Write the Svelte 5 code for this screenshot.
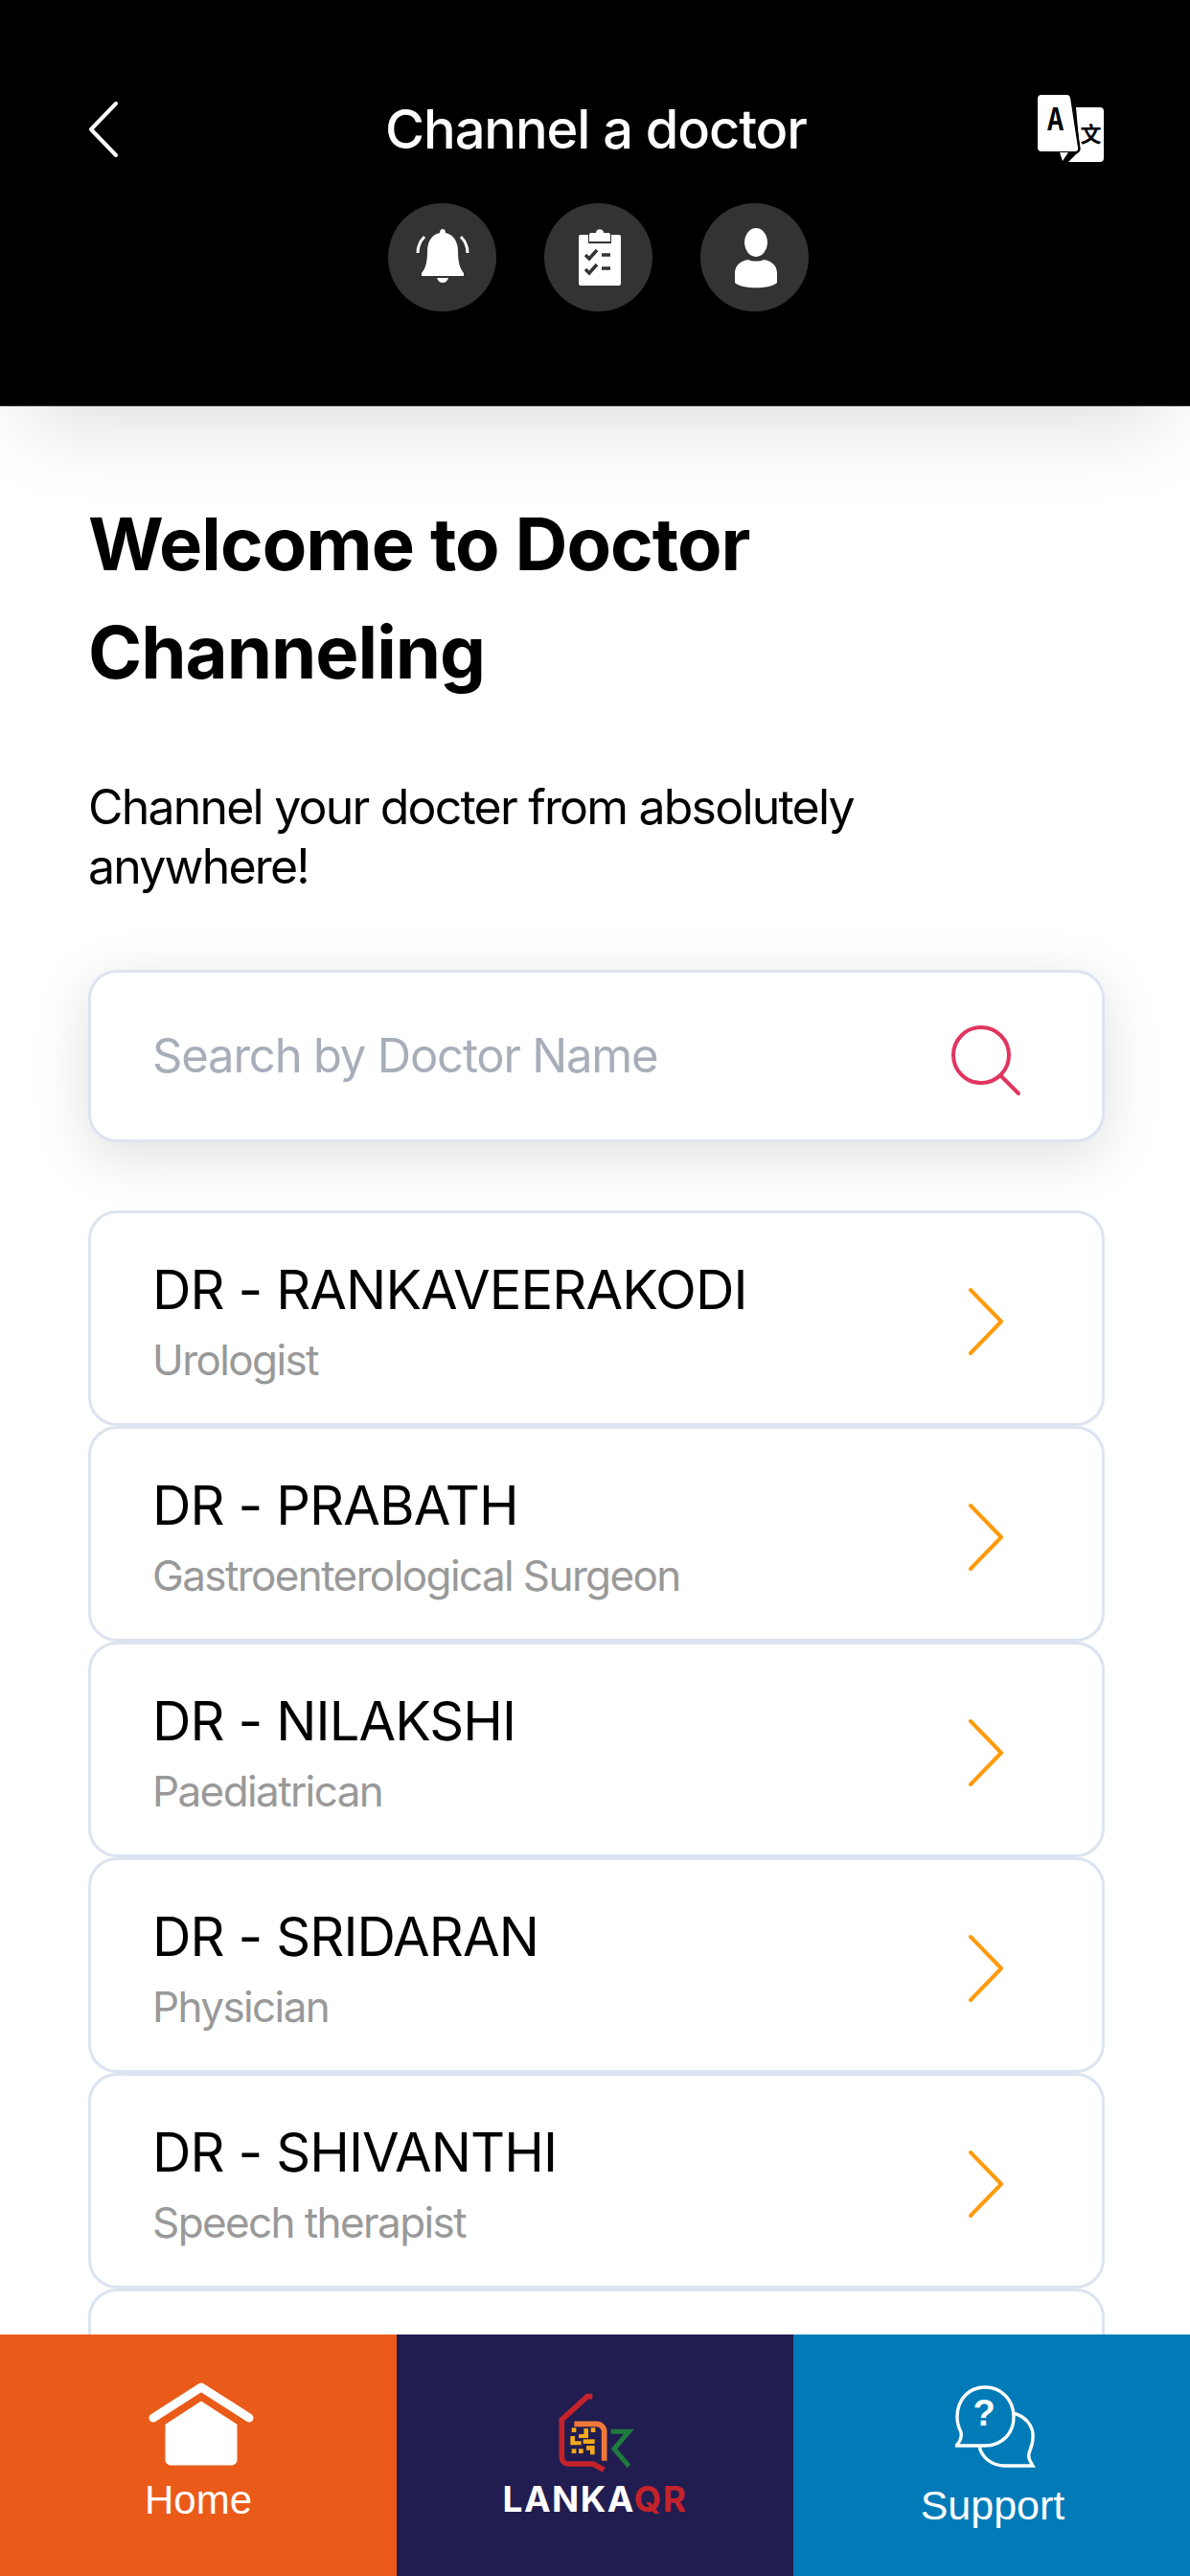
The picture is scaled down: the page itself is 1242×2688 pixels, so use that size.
<script lang="ts">
	const doctors = [
		{ name: 'DR - RANKAVEERAKODI', role: 'Urologist' },
		{ name: 'DR - PRABATH', role: 'Gastroenterological Surgeon' },
		{ name: 'DR - NILAKSHI', role: 'Paediatrican' },
		{ name: 'DR - SRIDARAN', role: 'Physician' },
		{ name: 'DR - SHIVANTHI', role: 'Speech therapist' }
	];
</script>

<div class="screen">
	<header>
		<div class="title-row">
			<svg class="back" width="34" height="60" viewBox="0 0 34 60">
				<path d="M30 3 L4 30 L30 57" fill="none" stroke="#fff" stroke-width="4" stroke-linecap="round" stroke-linejoin="round" />
			</svg>
			<h2>Channel a doctor</h2>
			<svg class="translate" width="70" height="72" viewBox="0 0 70 72">
				<path d="M40 13 H65 a4 4 0 0 1 4 4 V66 a4 4 0 0 1 -4 4 H32 L44 58 Z" fill="#fff" />
				<path d="M4 0 H30 a4 4 0 0 1 4 3 L42 55 a3 3 0 0 1 -3 4 H4 a4 4 0 0 1 -4 -4 V4 a4 4 0 0 1 4 -4 Z" fill="#fff" stroke="#000" stroke-width="5" paint-order="stroke" />
				<path d="M23 60 H32 L26 69 Z" fill="#fff" />
				<text class="glyph-a" transform="translate(18.5 37) scale(0.76 1)">A</text>
				<text class="glyph-b" x="55.5" y="49">文</text>
			</svg>
		</div>
		<div class="actions">
			<span class="round">
				<svg width="112" height="112" viewBox="0 0 112 112">
					<path d="M57 27 c2 0 3 2 3 4 c9 2 13 10 13 19 c0 12 2 18 6 23 v3 H35 v-3 c4 -5 6 -11 6 -23 c0 -9 4 -17 13 -19 c0 -2 1 -4 3 -4 Z" fill="#fff" />
					<path d="M51 78 H63 c-1 3 -3 5 -6 5 s-5 -2 -6 -5 Z" fill="#fff" />
					<path d="M31 52 c0 -7 2 -12 7 -17 M83 52 c0 -7 -2 -12 -7 -17" fill="none" stroke="#fff" stroke-width="3" />
				</svg>
			</span>
			<span class="round">
				<svg width="112" height="112" viewBox="0 0 112 112">
					<path d="M38 33 H46 V42 H70 V33 H78 a2 2 0 0 1 2 2 V84 a2 2 0 0 1 -2 2 H38 a2 2 0 0 1 -2 -2 V35 a2 2 0 0 1 2 -2 Z" fill="#fff" />
					<path d="M49 31 H54 c0 -5 8 -5 8 0 H67 a2 2 0 0 1 2 2 V40 H47 V33 a2 2 0 0 1 2 -2 Z" fill="#fff" />
					<path d="M43 54 L47 58 L55 49 M43 69 L47 73 L55 64" fill="none" stroke="#333" stroke-width="3.4" />
					<path d="M60 54 H69 M60 68 H69" fill="none" stroke="#333" stroke-width="3.4" />
				</svg>
			</span>
			<span class="round">
				<svg width="112" height="112" viewBox="0 0 112 112">
					<ellipse cx="58" cy="41" rx="12" ry="15" fill="#fff" />
					<path d="M50 59 c4 2 12 2 16 0 c8 1 14 6 14 14 V83 c-7 7 -37 7 -44 0 V73 c0 -8 6 -13 14 -14 Z" fill="#fff" />
				</svg>
			</span>
		</div>
	</header>

	<main>
		<h1>Welcome to Doctor Channeling</h1>
		<p class="intro">Channel your docter from absolutely anywhere!</p>

		<div class="search">
			<span class="placeholder">Search by Doctor Name</span>
			<svg width="74" height="74" viewBox="0 0 74 74">
				<circle cx="32" cy="31" r="29" fill="none" stroke="#e0355f" stroke-width="4" />
				<path d="M52 52 L71 71" fill="none" stroke="#e0355f" stroke-width="4" stroke-linecap="round" />
			</svg>
		</div>

		<ul class="doctors">
			{#each doctors as doctor}
				<li>
					<div class="info">
						<span class="name">{doctor.name}</span>
						<span class="role">{doctor.role}</span>
					</div>
					<svg class="chevron" width="38" height="72" viewBox="0 0 38 72">
						<path d="M3 3 L35 36 L3 69" fill="none" stroke="#ff9a0a" stroke-width="4" stroke-linecap="round" stroke-linejoin="round" />
					</svg>
				</li>
			{/each}
			<li></li>
		</ul>
	</main>

	<nav>
		<div class="tab home">
			<svg width="110" height="88" viewBox="0 0 110 88">
				<path d="M5 37 L55 5 L105 37" fill="none" stroke="#fff" stroke-width="9" stroke-linecap="round" stroke-linejoin="round" />
				<path d="M55 20 L92 44 V81 a5 5 0 0 1 -5 5 H23 a5 5 0 0 1 -5 -5 V44 Z" fill="#fff" stroke="#fff" stroke-width="1" stroke-linejoin="round" />
			</svg>
			<span>Home</span>
		</div>
		<div class="tab lanka">
			<svg width="80" height="84" viewBox="0 0 240 252">
				<path d="M112 14 H96 L16 87 V205 a20 20 0 0 0 20 20 H114 L148 244" fill="none" stroke="#c4232b" stroke-width="17" />
				<path d="M55 100 H125 a24 24 0 0 1 24 24 V215" fill="none" stroke="#f0793a" stroke-width="17" />
				<path d="M170 124 H226 L180 178 L226 232" fill="none" stroke="#1f7a3d" stroke-width="15" />
				<g fill="#f7a91c" transform="translate(-7 2)">
					<rect x="54" y="110" width="14" height="14" /><rect x="114" y="110" width="14" height="14" />
					<path d="M76 130 H92 V112 H106 V142 H76 Z" />
					<path d="M50 136 H64 V152 H84 V164 H50 Z" />
					<path d="M90 146 H126 V160 H90 Z" />
					<rect x="54" y="176" width="14" height="14" /><rect x="76" y="176" width="14" height="14" />
					<path d="M100 166 H126 V194 H112 V180 H100 Z" />
				</g>
			</svg>
			<span class="brand">LANKA<em>QR</em></span>
		</div>
		<div class="tab support">
			<svg width="86" height="88" viewBox="0 0 86 88">
				<path d="M23 64 H31 C50 64 61 50 61 34 C61 16 48 3 31 3 C14 3 2 16 2 34 C2 41 4 46 6 50 C7 56 5 60 1 64 Z" fill="none" stroke="#fff" stroke-width="3.4" />
				<path d="M60 30 C73 33 82 43 81 56 C81 63 78 68 77 72 C76 77 78 80 81 85 H52 C38 85 27 76 25 64" fill="none" stroke="#fff" stroke-width="3.4" />
				<text x="30" y="43" class="q">?</text>
			</svg>
			<span>Support</span>
		</div>
	</nav>
</div>

<style>
	:global(body) {
		margin: 0;
		background: #fff;
	}

	.screen {
		width: 1242px;
		height: 2688px;
		display: flex;
		flex-direction: column;
		overflow: hidden;
		font-family: Inter, 'Liberation Sans', sans-serif;
		color: #000;
	}

	header {
		flex: none;
		box-sizing: border-box;
		height: 424px;
		padding: 99px 89px 0 91px;
		background: #000;
		border-bottom: 1px solid #333;
		box-shadow: 0 50px 80px -30px rgba(0, 0, 0, 0.13);
		position: relative;
	}

	.title-row {
		display: grid;
		grid-template-columns: 1fr auto 1fr;
		align-items: start;
		height: 72px;
	}

	.back {
		margin-top: 6px;
	}

	.translate {
		justify-self: end;
	}

	h2 {
		margin: 0;
		font-size: 56px;
		line-height: 72px;
		font-weight: 500;
		letter-spacing: -1.1px;
		color: #fff;
	}

	.glyph-a {
		font-family: Inter, sans-serif;
		font-weight: 700;
		font-size: 32px;
		fill: #000;
		text-anchor: middle;
	}

	.glyph-b {
		font-family: 'Noto Sans CJK SC', sans-serif;
		font-weight: 700;
		font-size: 22px;
		fill: #000;
		text-anchor: middle;
	}

	.actions {
		display: flex;
		justify-content: center;
		gap: 50px;
		margin-top: 41px;
		margin-left: 4px;
	}

	.round {
		width: 113px;
		height: 113px;
		border-radius: 50%;
		background: #333;
		display: block;
	}

	.round svg {
		display: block;
	}

	main {
		flex: 1;
		min-height: 0;
		overflow: hidden;
		padding: 87px 89px 0 92px;
	}

	h1 {
		margin: 0;
		font-size: 76px;
		line-height: 113px;
		font-weight: 700;
		letter-spacing: -1px;
		max-width: 800px;
	}

	.intro {
		margin: 74px 0 0;
		font-size: 50px;
		line-height: 62px;
		letter-spacing: -1.8px;
		max-width: 900px;
	}

	.search {
		box-sizing: border-box;
		height: 180px;
		margin-top: 77px;
		padding: 0 88px 0 64px;
		display: flex;
		align-items: center;
		justify-content: space-between;
		border: 3px solid #dde3f0;
		border-radius: 30px;
		background: #fff;
		box-shadow: 0 14px 60px rgba(0, 0, 0, 0.13);
	}

	.search svg {
		margin-right: -4px;
		margin-top: 10px;
	}

	.placeholder {
		font-size: 49px;
		letter-spacing: -1.2px;
		color: #a8aeb9;
		margin-top: -2px;
	}

	.doctors {
		list-style: none;
		margin: 71px 0 0;
		padding: 0;
	}

	.doctors li {
		box-sizing: border-box;
		height: 225px;
		padding: 0 102px 0 64px;
		display: flex;
		align-items: center;
		justify-content: space-between;
		border: 3px solid #dde3f0;
		border-radius: 30px;
		background: #fff;
	}

	.info {
		display: flex;
		flex-direction: column;
		padding-top: 8px;
	}

	.chevron {
		margin-top: 6px;
	}

	.name {
		font-size: 56px;
		line-height: 72px;
		letter-spacing: -0.9px;
	}

	.role {
		font-size: 44px;
		line-height: 60px;
		margin-top: 7px;
		letter-spacing: -1.6px;
		color: #999;
	}

	nav {
		flex: none;
		height: 252px;
		display: grid;
		grid-template-columns: repeat(3, 1fr);
		position: relative;
	}

	.tab {
		display: flex;
		flex-direction: column;
		align-items: center;
		color: #fff;
		font-family: 'Liberation Sans', Arial, sans-serif;
		font-size: 43px;
		line-height: 48px;
	}

	.home {
		background: #ea5b1a;
		padding-top: 50px;
		gap: 11px;
		font-size: 42px;
	}

	.home svg {
		margin-left: 6px;
	}

	.lanka {
		background: #211d50;
		padding-top: 60px;
	}

	.support {
		background: #007bb8;
		padding-top: 52px;
		gap: 14px;
	}

	.support span {
		margin-left: 2px;
	}

	.support svg {
		margin-left: 10px;
	}

	.brand {
		font-family: Inter, sans-serif;
		font-weight: 700;
		font-size: 37px;
		line-height: 40px;
		letter-spacing: 1.5px;
		margin-top: 8px;
	}

	.brand em {
		font-style: normal;
		color: #c4232b;
	}

	.q {
		font-family: 'Liberation Sans', Arial, sans-serif;
		font-weight: 700;
		font-size: 38px;
		fill: #fff;
		text-anchor: middle;
	}
</style>
